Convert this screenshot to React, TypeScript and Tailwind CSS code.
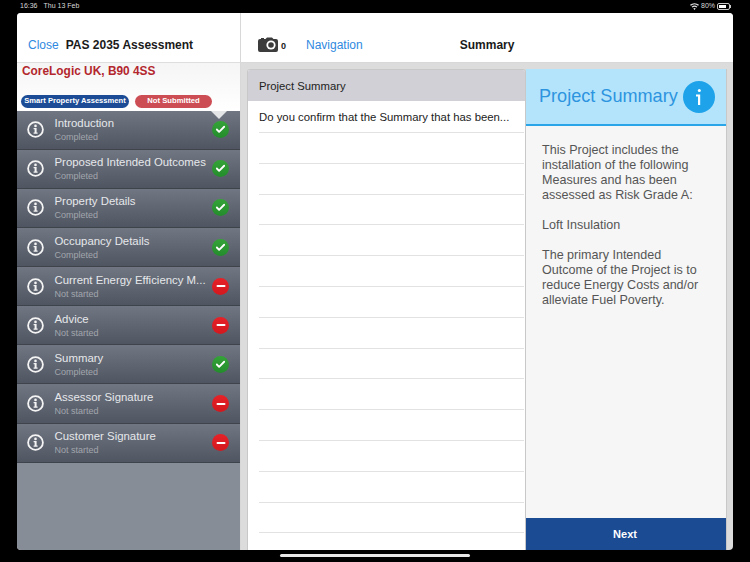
import { Check, Minus } from 'lucide-react';

const sections = [
  { title: 'Introduction', status: 'Completed', done: true },
  { title: 'Proposed Intended Outcomes', status: 'Completed', done: true },
  { title: 'Property Details', status: 'Completed', done: true },
  { title: 'Occupancy Details', status: 'Completed', done: true },
  { title: 'Current Energy Efficiency M...', status: 'Not started', done: false },
  { title: 'Advice', status: 'Not started', done: false },
  { title: 'Summary', status: 'Completed', done: true },
  { title: 'Assessor Signature', status: 'Not started', done: false },
  { title: 'Customer Signature', status: 'Not started', done: false },
];

const emptyRows = Array.from({ length: 14 }, (_, i) => i);

function InfoIcon() {
  return (
    <svg width="17" height="17" viewBox="0 0 17 17" className="shrink-0">
      <circle cx="8.5" cy="8.5" r="7.4" fill="none" stroke="#f4f4f4" strokeWidth="1.8" />
      <circle cx="8.5" cy="4.9" r="1.3" fill="#f4f4f4" />
      <path d="M6.6 7.1h3v4.4h1v1.2H6.6v-1.2h1V8.3h-1Z" fill="#f4f4f4" />
    </svg>
  );
}

function SectionRow({ title, status, done }: { title: string; status: string; done: boolean }) {
  return (
    <div className="flex h-[39.125px] items-center border-b border-[#3f444c] bg-gradient-to-b from-[#707682] to-[#4f5561] pl-[10px] pr-[11px]">
      <InfoIcon />
      <div className="ml-[10.5px] min-w-0 flex-1">
        <p className="whitespace-nowrap text-[11.4px] leading-[14px] text-[#e6e8eb]">{title}</p>
        <p className="mt-[1px] text-[9px] leading-[12px] text-[#a2a6ad]">{status}</p>
      </div>
      <div
        className={`flex h-[17px] w-[17px] shrink-0 items-center justify-center rounded-full bg-gradient-to-b ${
          done ? 'from-[#35a338] to-[#238c2c]' : 'from-[#e62228] to-[#d2181e]'
        }`}
      >
        {done ? (
          <Check size={11} strokeWidth={4} className="text-white" />
        ) : (
          <Minus size={12} strokeWidth={4} className="text-white" />
        )}
      </div>
    </div>
  );
}

export default function App() {
  return (
    <div className="relative h-[562px] w-[750px] overflow-hidden bg-black font-['Liberation_Sans',sans-serif]">
      {/* status bar */}
      <div className="flex h-[13px] items-center justify-between pl-[20px] pr-[19px] text-[7px] text-[#d8d8d8]">
        <div className="flex gap-[6px]">
          <span>16:36</span>
          <span>Thu 13 Feb</span>
        </div>
        <div className="flex items-center gap-[2px]">
          <svg width="9" height="7" viewBox="0 0 18 14" fill="#e5e5e5">
            <path d="M9 14 6.5 11a3.6 3.6 0 0 1 5 0ZM4.8 9.2l-1.6-1.9a9 9 0 0 1 11.6 0l-1.6 1.9a6.5 6.5 0 0 0-8.4 0ZM1.7 5.6 0 3.7a13.6 13.6 0 0 1 18 0l-1.7 1.9a11 11 0 0 0-14.6 0Z" />
          </svg>
          <span>80%</span>
          <div className="flex items-center">
            <div className="h-[7px] w-[13px] rounded-[2px] border border-[#c8c8c8] p-[1px]">
              <div className="h-full w-[80%] bg-white" />
            </div>
            <div className="h-[3px] w-[1px] bg-[#c8c8c8]" />
          </div>
        </div>
      </div>

      {/* app card */}
      <div className="ml-[17px] flex h-[537px] w-[716px] overflow-hidden rounded-[4px] bg-[#dcdcdc]">
        {/* left column */}
        <div className="flex w-[224px] shrink-0 flex-col border-r border-[#d8d8d8] bg-[#878d96]">
          <div className="flex h-[50px] items-end gap-[7px] border-b border-[#dedede] bg-white pb-[9px] pl-[11px]">
            <span className="text-[12px] leading-[15px] text-[#2f89e0]">Close</span>
            <span className="text-[12px] font-bold leading-[15px] text-[#1a1a1a]">PAS 2035 Assessment</span>
          </div>
          <div className="relative h-[47.6px] bg-gradient-to-b from-[#f5f5f5] to-[#ffffff]">
            <p className="pl-[5px] pt-[1px] text-[11.9px] font-bold leading-[14px] text-[#b3262d]">CoreLogic UK, B90 4SS</p>
            <div className="absolute bottom-[3px] left-[4px] flex gap-[6px]">
              <span className="flex h-[13px] w-[108px] items-center justify-center whitespace-nowrap rounded-full bg-[#1c4c96] text-[7.6px] font-bold text-white">
                Smart Property Assessment
              </span>
              <span className="flex h-[13px] w-[77px] items-center justify-center rounded-full bg-[#cd4d55] text-[7.7px] font-bold text-white">
                Not Submitted
              </span>
            </div>
          </div>
          <div className="relative">
            {sections.map((s) => (
              <SectionRow key={s.title} {...s} />
            ))}
            <div className="absolute right-[13px] top-0 h-0 w-0 border-x-[8px] border-t-[8px] border-x-transparent border-t-[#e4e5e7]" />
          </div>
        </div>

        {/* right area */}
        <div className="flex min-w-0 flex-1 flex-col">
          <div className="flex h-[50px] shrink-0 items-end border-b border-[#d8d8d8] bg-white pb-[9px] pl-[17px]">
            <svg width="20" height="15" viewBox="0 0 20 15" className="mb-[1px]">
              <path
                d="M2 2h1V1h3v1h1.5L9 .5h5L15.5 2H18a2 2 0 0 1 2 2v9a2 2 0 0 1-2 2H2a2 2 0 0 1-2-2V4a2 2 0 0 1 2-2Z"
                fill="#3c3c3c"
              />
              <circle cx="13" cy="8" r="4.6" fill="#fff" />
              <circle cx="13" cy="8" r="2.8" fill="#3c3c3c" />
            </svg>
            <span className="ml-[3px] text-[9px] font-bold leading-[13px] text-[#222]">0</span>
            <span className="ml-[20px] text-[12px] leading-[15px] text-[#2f89e0]">Navigation</span>
            <span className="ml-[97px] text-[12px] font-bold leading-[15px] text-[#1a1a1a]">Summary</span>
          </div>

          <div className="flex min-h-0 flex-1 pl-[6px] pr-[6px] pt-[6px]">
            {/* question list */}
            <div className="w-[279px] shrink-0 overflow-hidden rounded-t-[3px] border-x border-t border-[#c8c8c8] bg-white">
              <div className="flex h-[31px] items-center bg-[#d1d0d6] pl-[11px] pt-[1px] text-[11.3px] text-[#222]">Project Summary</div>
              <div className="flex h-[31px] items-center pl-[11px] pt-[2px] text-[11.35px] text-[#222]">
                Do you confirm that the Summary that has been...
              </div>
              {emptyRows.map((i) => (
                <div key={i} className="ml-[11px] mr-[1px] h-[30.8px] border-t border-[#e2e2e2]" />
              ))}
            </div>

            {/* help panel */}
            <div className="flex w-[201px] shrink-0 flex-col border-r border-[#c8c8c8] bg-[#f6f6f6]">
              <div className="flex h-[57px] shrink-0 items-center justify-between border-b-2 border-[#2aa5e8] bg-[#b4e4fb] pl-[13px] pr-[11px]">
                <span className="text-[18.1px] text-[#2d94e0]">Project Summary</span>
                <svg width="32" height="32" viewBox="0 0 32 32">
                  <circle cx="16" cy="16" r="16" fill="#1ea3ea" />
                  <circle cx="16.3" cy="9.5" r="1.5" fill="#fff" />
                  <path d="M13 13.5h4.2V24h-2.2v-8.6H13Z" fill="#fff" />
                </svg>
              </div>
              <div className="flex-1 pl-[16px] pr-[12px] pt-[17px] text-[12.55px] leading-[15px] text-[#555555]">
                <p>
                  This Project includes the
                  <br />
                  installation of the following
                  <br />
                  Measures and has been
                  <br />
                  assessed as Risk Grade A:
                </p>
                <p className="mt-[15px]">Loft Insulation</p>
                <p className="mt-[15px]">
                  The primary Intended
                  <br />
                  Outcome of the Project is to
                  <br />
                  reduce Energy Costs and/or
                  <br />
                  alleviate Fuel Poverty.
                </p>
              </div>
              <div className="flex h-[32px] shrink-0 items-center justify-center bg-[#1b4b93] pr-[2px] text-[11px] font-bold text-white">Next</div>
            </div>
          </div>
        </div>
      </div>

      {/* home indicator */}
      <div className="mx-auto mt-[4px] h-[3px] w-[190px] rounded-full bg-[#e8e8e8]" />
    </div>
  );
}
